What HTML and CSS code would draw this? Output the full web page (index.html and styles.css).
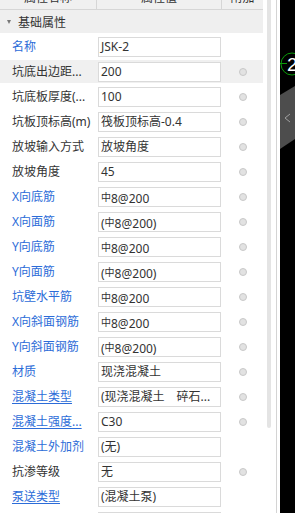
FILE: index.html
```html
<!DOCTYPE html>
<html lang="zh-CN">
<head>
  <meta charset="UTF-8">
  <meta name="viewport" content="width=device-width, initial-scale=1.0">
  <title>属性列表</title>
  <link rel="stylesheet" href="styles.css">
</head>
<body>
  <div class="panel">
    <div class="head">
      <div class="head-cell">属性名称</div>
      <div class="head-cell">属性值</div>
      <div class="head-cell">附加</div>
    </div>

    <div class="group"><span class="arrow"></span>基础属性</div>

    <div class="row">
      <div class="name blue">名称</div>
      <div class="value"><div class="box">JSK-2</div></div>
      <div class="extra"></div>
    </div>
    <div class="row hover">
      <div class="name">坑底出边距...</div>
      <div class="value"><div class="box">200</div></div>
      <div class="extra"><span class="dot"></span></div>
    </div>
    <div class="row">
      <div class="name">坑底板厚度(...</div>
      <div class="value"><div class="box">100</div></div>
      <div class="extra"><span class="dot"></span></div>
    </div>
    <div class="row">
      <div class="name">坑板顶标高(m)</div>
      <div class="value"><div class="box">筏板顶标高-0.4</div></div>
      <div class="extra"><span class="dot"></span></div>
    </div>
    <div class="row">
      <div class="name">放坡输入方式</div>
      <div class="value"><div class="box">放坡角度</div></div>
      <div class="extra"><span class="dot"></span></div>
    </div>
    <div class="row">
      <div class="name">放坡角度</div>
      <div class="value"><div class="box">45</div></div>
      <div class="extra"><span class="dot"></span></div>
    </div>
    <div class="row">
      <div class="name blue">X向底筋</div>
      <div class="value"><div class="box"><span class="bar">中</span>8@200</div></div>
      <div class="extra"><span class="dot"></span></div>
    </div>
    <div class="row">
      <div class="name blue">X向面筋</div>
      <div class="value"><div class="box">(<span class="bar">中</span>8@200)</div></div>
      <div class="extra"><span class="dot"></span></div>
    </div>
    <div class="row">
      <div class="name blue">Y向底筋</div>
      <div class="value"><div class="box"><span class="bar">中</span>8@200</div></div>
      <div class="extra"><span class="dot"></span></div>
    </div>
    <div class="row">
      <div class="name blue">Y向面筋</div>
      <div class="value"><div class="box">(<span class="bar">中</span>8@200)</div></div>
      <div class="extra"><span class="dot"></span></div>
    </div>
    <div class="row">
      <div class="name blue">坑壁水平筋</div>
      <div class="value"><div class="box"><span class="bar">中</span>8@200</div></div>
      <div class="extra"><span class="dot"></span></div>
    </div>
    <div class="row">
      <div class="name blue">X向斜面钢筋</div>
      <div class="value"><div class="box"><span class="bar">中</span>8@200</div></div>
      <div class="extra"><span class="dot"></span></div>
    </div>
    <div class="row">
      <div class="name blue">Y向斜面钢筋</div>
      <div class="value"><div class="box">(<span class="bar">中</span>8@200)</div></div>
      <div class="extra"><span class="dot"></span></div>
    </div>
    <div class="row">
      <div class="name blue">材质</div>
      <div class="value"><div class="box">现浇混凝土</div></div>
      <div class="extra"><span class="dot"></span></div>
    </div>
    <div class="row">
      <div class="name blue link">混凝土类型</div>
      <div class="value"><div class="box">(现浇混凝土　碎石...</div></div>
      <div class="extra"><span class="dot"></span></div>
    </div>
    <div class="row">
      <div class="name blue link">混凝土强度...</div>
      <div class="value"><div class="box">C30</div></div>
      <div class="extra"><span class="dot"></span></div>
    </div>
    <div class="row">
      <div class="name blue">混凝土外加剂</div>
      <div class="value"><div class="box">(无)</div></div>
      <div class="extra"></div>
    </div>
    <div class="row">
      <div class="name">抗渗等级</div>
      <div class="value"><div class="box">无</div></div>
      <div class="extra"><span class="dot"></span></div>
    </div>
    <div class="row">
      <div class="name blue link">泵送类型</div>
      <div class="value"><div class="box">(混凝土泵)</div></div>
      <div class="extra"></div>
    </div>
    <div class="row">
      <div class="name"></div>
      <div class="value"><div class="box"></div></div>
      <div class="extra"></div>
    </div>
  </div>

  <div class="scrollbar"><div class="thumb"></div></div>
  <div class="splitter"></div>

  <div class="canvas">
    <svg class="axis" width="15" height="30" viewBox="0 0 15 30">
      <circle cx="12" cy="15" r="11" fill="none" stroke="#0a9a0a" stroke-width="1"/>
      <line x1="0" y1="14.5" x2="7" y2="14.5" stroke="#0a9a0a" stroke-width="1"/>
      <text x="7" y="22" fill="#fff" font-family="Liberation Sans, sans-serif" font-size="19">2</text>
    </svg>
    <div class="tab">
      <svg width="15" height="70" viewBox="0 0 15 70">
        <polyline points="10,28 5,32 10,36" fill="none" stroke="#a0a0a0" stroke-width="1"/>
      </svg>
    </div>
  </div>
</body>
</html>
```

FILE: styles.css
```css
* {
  margin: 0;
  padding: 0;
  box-sizing: border-box;
}

html, body {
  width: 100%;
  height: 100%;
  overflow: hidden;
}

body {
  display: flex;
  background-color: #fff;
  font-family: "Noto Sans", "Noto Sans CJK SC", sans-serif;
  font-size: 12px;
  color: #333;
}

.panel {
  width: 263px;
  flex-shrink: 0;
  margin-top: -15px;
}

.head {
  display: grid;
  grid-template-columns: 97px 125px 41px;
  height: 25px;
  background-color: #f0f0f0;
  border-bottom: 1px solid #d6d6d6;
}

.head-cell {
  display: flex;
  align-items: center;
  justify-content: center;
  border-right: 1px solid #d6d6d6;
  color: #333;
}

.head-cell:last-child {
  border-right: none;
}

.group {
  display: flex;
  align-items: center;
  height: 23px;
  margin-bottom: 2px;
  padding-left: 7px;
  background-color: #efefef;
  color: #333;
}

.arrow {
  width: 0;
  height: 0;
  margin-right: 7px;
  border-left: 2.5px solid transparent;
  border-right: 2.5px solid transparent;
  border-top: 4px solid #777;
}

.row {
  display: grid;
  grid-template-columns: 97px 125px 41px;
  height: 23px;
  margin-bottom: 2px;
}

.row.hover {
  background-color: #f0f0f0;
}

.name {
  padding-left: 12px;
  line-height: 23px;
  white-space: nowrap;
  overflow: hidden;
}

.blue {
  color: #2c6cd8;
}

.link {
  text-decoration: underline;
  text-underline-offset: 2px;
}

.value {
  padding: 2px 1px 1px;
}

.box {
  height: 20px;
  padding-left: 2px;
  line-height: 18px;
  background-color: #fff;
  border: 1px solid #dadada;
  white-space: nowrap;
  overflow: hidden;
}

.bar {
  font-size: 10px;
  vertical-align: 2px;
}

.extra {
  display: flex;
  align-items: center;
  justify-content: center;
}

.dot {
  width: 8px;
  height: 8px;
  border-radius: 50%;
  background-color: #e2e2e2;
  border: 1px solid #c8c8c8;
}

.scrollbar {
  width: 13px;
  flex-shrink: 0;
  padding-left: 4px;
}

.thumb {
  width: 4px;
  height: 428px;
  background-color: #e4e4e4;
  border-radius: 0 0 2px 2px;
}

.splitter {
  width: 4px;
  flex-shrink: 0;
  border-left: 1px solid #d4d4d4;
}

.canvas {
  flex: 1;
  position: relative;
  background-color: #000;
}

.axis {
  position: absolute;
  top: 49px;
  left: 0;
}

.tab {
  position: absolute;
  top: 86px;
  left: 0;
  width: 15px;
  height: 64px;
  background-color: #4d4d4d;
  clip-path: polygon(0 9px, 100% 0, 100% 53px, 0 63px);
}

.tab svg {
  display: block;
}
```
